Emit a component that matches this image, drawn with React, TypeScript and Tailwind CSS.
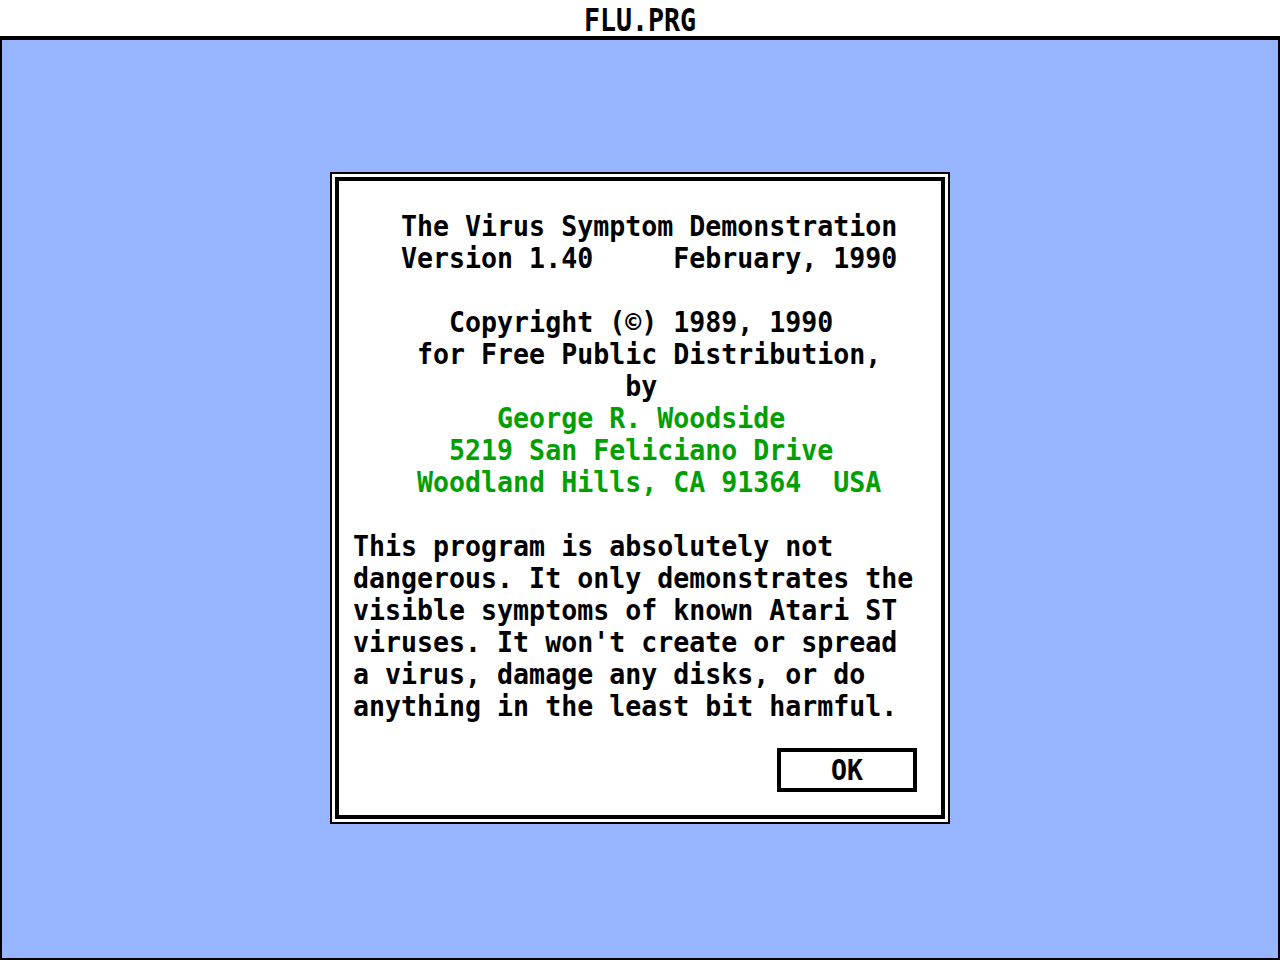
import React from "react";

const FONT = "font-['DejaVu_Sans_Mono','Liberation_Mono',monospace]";

const HEADER_LINES = [
  { text: "   The Virus Symptom Demonstration", green: false },
  { text: "   Version 1.40     February, 1990", green: false },
  { text: "", green: false },
  { text: "      Copyright (©) 1989, 1990", green: false },
  { text: "    for Free Public Distribution,", green: false },
  { text: "                 by", green: false },
  { text: "         George R. Woodside", green: true },
  { text: "      5219 San Feliciano Drive", green: true },
  { text: "    Woodland Hills, CA 91364  USA", green: true },
  { text: "", green: false },
];

const BODY_LINES = [
  "This program is absolutely not",
  "dangerous. It only demonstrates the",
  "visible symptoms of known Atari ST",
  "viruses. It won't create or spread",
  "a virus, damage any disks, or do",
  "anything in the least bit harmful.",
];

function Line({ text, green }: { text: string; green?: boolean }) {
  return (
    <div className={`h-[32px] leading-[32px] whitespace-pre ${green ? "text-[#00a000]" : "text-black"}`}>
      <span className="inline-block origin-center scale-y-[1.08]">{text || " "}</span>
    </div>
  );
}

export default function App() {
  return (
    <div className={`w-[1280px] h-[960px] flex flex-col bg-white ${FONT} text-[26.6px] font-bold`}>
      {/* Title bar */}
      <div className="h-[40px] shrink-0 flex items-center justify-center pt-[3px] border-b-4 border-black bg-white">
        <span className="inline-block leading-[32px] scale-y-[1.2]">FLU.PRG</span>
      </div>

      {/* Desktop */}
      <div className="flex-1 bg-[#97b6ff] border-2 border-t-0 border-black flex justify-center pt-[132px]">
        <div className="w-[620px] h-[652px] bg-white border-2 border-black p-[3px] flex">
          <div className="flex-1 border-[4px] border-black flex flex-col pt-[29px] pl-[14px]">
            {HEADER_LINES.map((l, i) => (
              <Line key={i} text={l.text} green={l.green} />
            ))}
            {BODY_LINES.map((t, i) => (
              <Line key={"b" + i} text={t} />
            ))}
            <button className="self-end mt-[26px] mr-[24px] w-[140px] h-[44px] border-[4px] border-black bg-white flex items-center justify-center">
              <span className="inline-block leading-[32px] scale-y-[1.08]">OK</span>
            </button>
          </div>
        </div>
      </div>
    </div>
  );
}
